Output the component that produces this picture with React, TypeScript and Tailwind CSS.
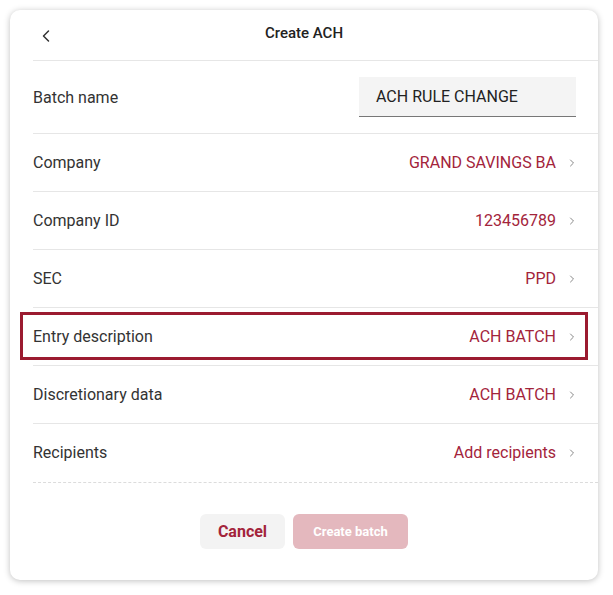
import { ChevronLeft, ChevronRight } from "lucide-react";

type Row = { label: string; value: string; highlight?: boolean };

const rows: Row[] = [
  { label: "Company", value: "GRAND SAVINGS BA" },
  { label: "Company ID", value: "123456789" },
  { label: "SEC", value: "PPD" },
  { label: "Entry description", value: "ACH BATCH", highlight: true },
  { label: "Discretionary data", value: "ACH BATCH" },
];

export default function App() {
  return (
    <div className="min-h-[595px] bg-white p-[10px] font-['Roboto',sans-serif] text-[#333]">
      <div className="flex h-[570px] w-[588px] flex-col rounded-[10px] bg-white shadow-[0_1px_6px_rgba(0,0,0,0.25)]">
        {/* header */}
        <div className="relative flex h-[50px] items-center justify-center">
          <ChevronLeft className="absolute left-[26px] top-[16px] h-[20px] w-[20px] text-[#333]" strokeWidth={1.8} />
          <span className="-mt-[4px] text-[15px] font-medium text-[#222]">Create ACH</span>
        </div>

        <div className="ml-[23px] flex h-[74px] items-center justify-between border-y border-[#e6e6e6] pr-[22px]">
          <span className="mt-[1px] text-[16px]">Batch name</span>
          <div className="flex h-[40px] w-[217px] items-center border-b border-[#777] bg-[#f4f4f4] pl-[17px] text-[16px] text-[#222]">
            ACH RULE CHANGE
          </div>
        </div>

        {rows.map((r) => (
          <div
            key={r.label}
            className="relative ml-[23px] flex h-[58px] items-center justify-between border-b border-[#e6e6e6] pr-[20px]"
          >
            <span className="text-[16px]">{r.label}</span>
            <div className="flex items-center gap-[10px]">
              <span className="text-[16px] text-[#a3243b]">{r.value}</span>
              <ChevronRight className="h-[12px] w-[12px] text-[#888]" strokeWidth={2} />
            </div>
            {r.highlight && (
              <div className="pointer-events-none absolute left-[-13px] top-[4px] h-[48px] w-[568px] border-[3px] border-[#9b1b30]" />
            )}
          </div>
        ))}

        <div className="ml-[23px] flex h-[59px] items-center justify-between border-b border-dashed border-[#dcdcdc] pr-[20px]">
          <span className="text-[16px]">Recipients</span>
          <div className="flex items-center gap-[10px]">
            <span className="text-[16px] text-[#a3243b]">Add recipients</span>
            <ChevronRight className="h-[12px] w-[12px] text-[#888]" strokeWidth={2} />
          </div>
        </div>

        <div className="mt-[31px] flex justify-center gap-[8px]">
          <button className="h-[35px] w-[85px] rounded-[6px] bg-[#f3f3f3] text-[16px] font-bold text-[#a3243b]">
            Cancel
          </button>
          <button className="h-[35px] w-[115px] rounded-[6px] bg-[#e4b8be] text-[13px] font-bold text-white">
            Create batch
          </button>
        </div>
      </div>
    </div>
  );
}
